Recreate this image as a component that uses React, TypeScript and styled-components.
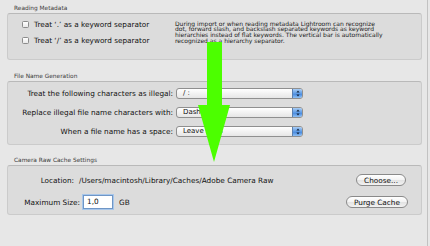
import React from "react";
import styled, {createGlobalStyle} from "styled-components";

const GlobalStyle = createGlobalStyle`
  html, body {
    margin: 0;
    padding: 0;
    background: #e7e7e7;
  }
  body {
    font-family: "DejaVu Sans", "Liberation Sans", sans-serif;
    color: #111;
  }
`;

const descriptionLines = [
  "During import or when reading metadata Lightroom can recognize",
  "dot, forward slash, and backslash separated keywords as keyword",
  "hierarchies instead of flat keywords. The vertical bar is automatically",
  "recognized as a hierarchy separator.",
];

const fileNameRows = [
  {label: "Treat the following characters as illegal:", value: "/ :"},
  {label: "Replace illegal file name characters with:", value: "Dashes"},
  {label: "When a file name has a space:", value: "Leave As-Is"},
];

const Checkbox = ({label}: {label: string}) => (
  <CheckRow>
    <CheckBox />
    <span>{label}</span>
  </CheckRow>
);

const Popup = ({value}: {value: string}) => (
  <PopupButton>
    <PopupText>{value}</PopupText>
    <Stepper>
      <svg width="4" height="7" viewBox="0 0 4 7">
        <path d="M2 0.5 L3.6 2.6 L0.4 2.6 Z" fill="#10223a" />
        <path d="M2 6.5 L3.6 4.4 L0.4 4.4 Z" fill="#10223a" />
      </svg>
    </Stepper>
  </PopupButton>
);

const App = () => {
  return (
    <>
      <GlobalStyle />
      <Window>
        <Frame>
          <Section>
            <GroupLabel>Reading Metadata</GroupLabel>
            <Panel height={47}>
              <MetadataRow>
                <CheckList>
                  <Checkbox label="Treat ‘.’ as a keyword separator" />
                  <Checkbox label="Treat ‘/’ as a keyword separator" />
                </CheckList>
                <Description>
                  {descriptionLines.map((line) => (
                    <DescriptionLine key={line}>{line}</DescriptionLine>
                  ))}
                </Description>
              </MetadataRow>
            </Panel>
          </Section>

          <Section gap={11}>
            <GroupLabel>File Name Generation</GroupLabel>
            <Panel height={64}>
              <FileNameGrid>
                {fileNameRows.map((row) => (
                  <React.Fragment key={row.label}>
                    <RowLabel>{row.label}</RowLabel>
                    <Popup value={row.value} />
                  </React.Fragment>
                ))}
              </FileNameGrid>
            </Panel>
          </Section>

          <Section gap={10}>
            <GroupLabel>Camera Raw Cache Settings</GroupLabel>
            <Panel height={50}>
              <CacheRows>
                <CacheRow>
                  <CacheLabel width={66}>Location:</CacheLabel>
                  <PathText>/Users/macintosh/Library/Caches/Adobe Camera Raw</PathText>
                  <Spacer />
                  <PushButton width={50} right={15}>
                    Choose...
                  </PushButton>
                </CacheRow>
                <CacheRow>
                  <CacheLabel width={72}>Maximum Size:</CacheLabel>
                  <SizeField>1,0</SizeField>
                  <Unit>GB</Unit>
                  <Spacer />
                  <PushButton width={62} right={13}>
                    Purge Cache
                  </PushButton>
                </CacheRow>
              </CacheRows>
            </Panel>
          </Section>
        </Frame>

        <Arrow width="430" height="246" viewBox="0 0 430 246">
          <polygon
            points="207,42 222,42 222,105 230,105 214,162 198,105 207,105"
            fill="#4cff00"
          />
        </Arrow>
      </Window>
    </>
  );
};

const Window = styled.div`
  position: relative;
  width: 430px;
  height: 246px;
  overflow: hidden;
  background: #e7e7e7;
`;

const Frame = styled.div`
  box-sizing: border-box;
  width: 428px;
  height: 246px;
  padding: 3px 5px 0 7px;
  border-right: 1px solid #c2c2c2;
  display: flex;
  flex-direction: column;
`;

const Section = styled.div<{gap?: number}>`
  display: flex;
  flex-direction: column;
  margin-top: ${(p) => p.gap || 0}px;
`;

const GroupLabel = styled.div`
  height: 10px;
  line-height: 10px;
  padding-left: 7px;
  font-size: 5.85px;
  color: #3a3a3a;
`;

const Panel = styled.div<{height: number}>`
  box-sizing: border-box;
  height: ${(p) => p.height}px;
  background: #dcdcdc;
  border: 1px solid #cbcbcb;
  border-top-color: #b9b9b9;
  border-radius: 3px;
`;

const MetadataRow = styled.div`
  display: flex;
`;

const CheckList = styled.div`
  width: 152px;
  padding: 2px 0 0 14px;
  box-sizing: border-box;
  display: flex;
  flex-direction: column;
`;

const CheckRow = styled.div`
  height: 16px;
  display: flex;
  align-items: center;
  gap: 5px;
  font-size: 7.3px;
  white-space: nowrap;
`;

const CheckBox = styled.span`
  box-sizing: border-box;
  width: 7px;
  height: 7px;
  border: 1px solid #8c8c8c;
  border-radius: 1.5px;
  background: linear-gradient(#ffffff, #e9e9e9);
  flex-shrink: 0;
`;

const Description = styled.div`
  margin-top: 6.5px;
  margin-left: 15px;
  display: flex;
  flex-direction: column;
  font-size: 6px;
  line-height: 5.7px;
  color: #1a1a1a;
`;

const DescriptionLine = styled.span`
  white-space: nowrap;
`;

const FileNameGrid = styled.div`
  display: grid;
  grid-template-columns: 165px 127px;
  grid-auto-rows: 19px;
  column-gap: 3px;
  align-items: center;
  padding-top: 1.5px;
`;

const RowLabel = styled.span`
  justify-self: end;
  font-size: 7.3px;
  white-space: nowrap;
`;

const PopupButton = styled.div`
  box-sizing: border-box;
  height: 11px;
  display: flex;
  align-items: stretch;
  border: 1px solid #8f8f8f;
  border-radius: 3px;
  background: linear-gradient(#ffffff, #f1f1f1 55%, #e6e6e6);
  overflow: hidden;
`;

const PopupText = styled.span`
  flex: 1;
  padding-left: 6px;
  font-size: 7px;
  line-height: 9px;
  white-space: nowrap;
`;

const Stepper = styled.span`
  width: 9px;
  display: flex;
  align-items: center;
  justify-content: center;
  border-left: 1px solid #5a80b0;
  background: linear-gradient(#a9cdf5, #5d9ae4 50%, #3f83dc 51%, #8fc0f4);
`;

const CacheRows = styled.div`
  display: flex;
  flex-direction: column;
  padding-top: 3px;
`;

const CacheRow = styled.div`
  height: 22px;
  display: flex;
  align-items: center;
  font-size: 7.3px;
  white-space: nowrap;
`;

const CacheLabel = styled.span<{width: number}>`
  width: ${(p) => p.width}px;
  text-align: right;
`;

const PathText = styled.span`
  margin-left: 5px;
`;

const SizeField = styled.span`
  box-sizing: border-box;
  width: 30px;
  height: 14px;
  margin-left: 3px;
  padding-left: 3px;
  line-height: 12px;
  background: #fff;
  border: 1px solid #6f96c6;
  box-shadow: 0 0 0 1px #a7c6ea;
`;

const Unit = styled.span`
  margin-left: 6px;
`;

const Spacer = styled.span`
  flex: 1;
`;

const PushButton = styled.span<{width: number; right: number}>`
  box-sizing: border-box;
  width: ${(p) => p.width}px;
  height: 12px;
  margin-right: ${(p) => p.right}px;
  display: flex;
  align-items: center;
  justify-content: center;
  border: 1px solid #8a8a8a;
  border-radius: 6px;
  background: linear-gradient(#ffffff, #f3f3f3 50%, #e2e2e2 51%, #f2f2f2);
  font-size: 7.3px;
`;

const Arrow = styled.svg`
  position: absolute;
  left: 0;
  top: 0;
  pointer-events: none;
`;

export default App;
